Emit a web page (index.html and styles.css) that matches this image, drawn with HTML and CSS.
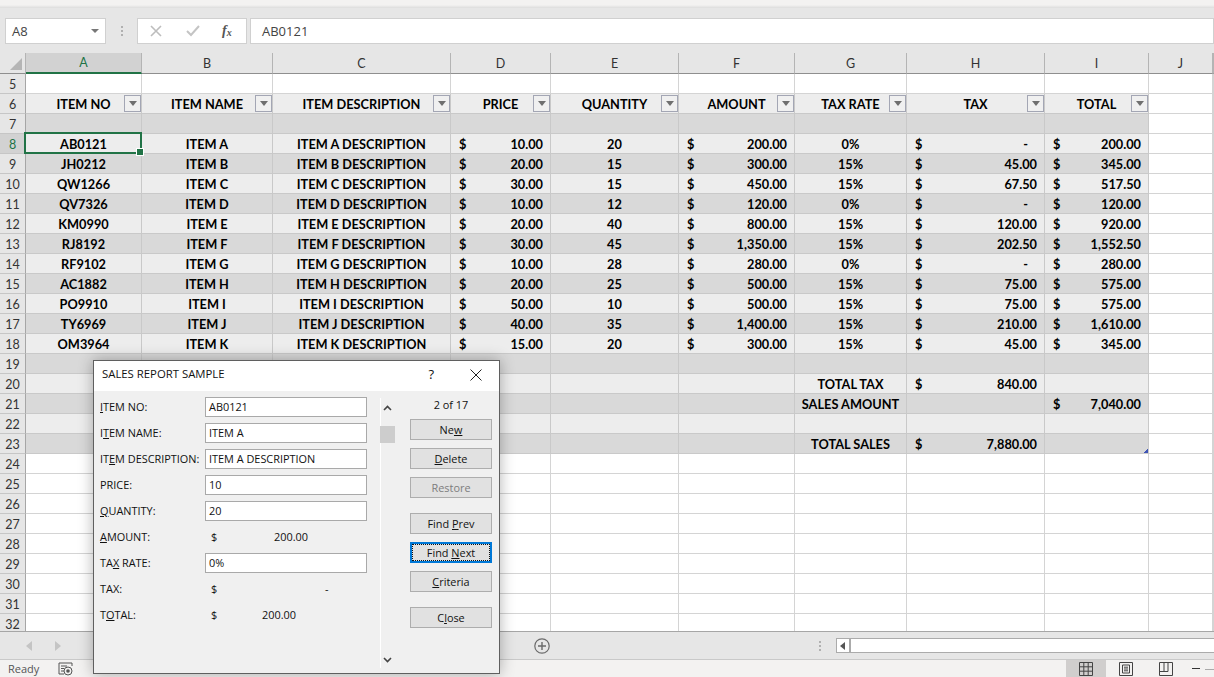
FILE: index.html
```html
<!DOCTYPE html>
<html lang="en">
<head>
<meta charset="utf-8">
<title>Sales Report Sample</title>
<link rel="stylesheet" href="styles.css">
</head>
<body>
<div class="app">
  <div class="topstrip"></div>
  <div class="fbar">
    <div class="namebox"><span>A8</span><i class="caret"></i></div>
    <div class="dots"><b></b><b></b><b></b></div>
    <div class="fxbox">
      <svg class="ficon" width="12" height="12" viewBox="0 0 12 12"><path d="M1 1l10 10M11 1L1 11" stroke="#bdbdbd" stroke-width="1.6" fill="none"/></svg>
      <svg class="ficon" width="14" height="12" viewBox="0 0 14 12"><path d="M1 6l4 4 8-9" stroke="#c4c4c4" stroke-width="2" fill="none"/></svg>
      <span class="fx">f<sub>x</sub></span>
    </div>
    <div class="formula">AB0121</div>
  </div>
  <div class="gridwrap">
    <table class="sheet">
      <colgroup><col class="c0"><col class="ca"><col class="cb"><col class="cc"><col class="cd"><col class="ce"><col class="cf"><col class="cg"><col class="ch"><col class="ci"><col class="cj"><col class="ck"></colgroup>
      <thead><tr><th class="corner"><i></i></th><th class="sel">A</th><th>B</th><th>C</th><th>D</th><th>E</th><th>F</th><th>G</th><th>H</th><th>I</th><th>J</th><th></th></tr></thead>
      <tbody>
        <tr><th>5</th><td></td><td></td><td></td><td></td><td></td><td></td><td></td><td></td><td></td><td></td><td></td></tr>
        <tr class="lt"><th>6</th><td class="hd">ITEM NO<i class="flt"></i></td><td class="hd">ITEM NAME<i class="flt"></i></td><td class="hd">ITEM DESCRIPTION<i class="flt"></i></td><td class="hd">PRICE<i class="flt"></i></td><td class="hd">QUANTITY<i class="flt"></i></td><td class="hd">AMOUNT<i class="flt"></i></td><td class="hd">TAX RATE<i class="flt"></i></td><td class="hd">TAX<i class="flt"></i></td><td class="hd">TOTAL<i class="flt"></i></td><td></td><td></td></tr>
        <tr class="dk"><th>7</th><td></td><td></td><td></td><td></td><td></td><td></td><td></td><td></td><td></td><td></td><td></td></tr>
        <tr class="lt"><th class="sel">8</th><td class="cur">AB0121<i class="cursor"></i></td><td>ITEM A</td><td>ITEM A DESCRIPTION</td><td><div class="acc"><span>$</span><span>10.00</span></div></td><td>20</td><td><div class="acc"><span>$</span><span>200.00</span></div></td><td>0%</td><td><div class="acc"><span>$</span><span class="dash">-</span></div></td><td><div class="acc"><span>$</span><span>200.00</span></div></td><td></td><td></td></tr>
        <tr class="dk"><th>9</th><td>JH0212</td><td>ITEM B</td><td>ITEM B DESCRIPTION</td><td><div class="acc"><span>$</span><span>20.00</span></div></td><td>15</td><td><div class="acc"><span>$</span><span>300.00</span></div></td><td>15%</td><td><div class="acc"><span>$</span><span>45.00</span></div></td><td><div class="acc"><span>$</span><span>345.00</span></div></td><td></td><td></td></tr>
        <tr class="lt"><th>10</th><td>QW1266</td><td>ITEM C</td><td>ITEM C DESCRIPTION</td><td><div class="acc"><span>$</span><span>30.00</span></div></td><td>15</td><td><div class="acc"><span>$</span><span>450.00</span></div></td><td>15%</td><td><div class="acc"><span>$</span><span>67.50</span></div></td><td><div class="acc"><span>$</span><span>517.50</span></div></td><td></td><td></td></tr>
        <tr class="dk"><th>11</th><td>QV7326</td><td>ITEM D</td><td>ITEM D DESCRIPTION</td><td><div class="acc"><span>$</span><span>10.00</span></div></td><td>12</td><td><div class="acc"><span>$</span><span>120.00</span></div></td><td>0%</td><td><div class="acc"><span>$</span><span class="dash">-</span></div></td><td><div class="acc"><span>$</span><span>120.00</span></div></td><td></td><td></td></tr>
        <tr class="lt"><th>12</th><td>KM0990</td><td>ITEM E</td><td>ITEM E DESCRIPTION</td><td><div class="acc"><span>$</span><span>20.00</span></div></td><td>40</td><td><div class="acc"><span>$</span><span>800.00</span></div></td><td>15%</td><td><div class="acc"><span>$</span><span>120.00</span></div></td><td><div class="acc"><span>$</span><span>920.00</span></div></td><td></td><td></td></tr>
        <tr class="dk"><th>13</th><td>RJ8192</td><td>ITEM F</td><td>ITEM F DESCRIPTION</td><td><div class="acc"><span>$</span><span>30.00</span></div></td><td>45</td><td><div class="acc"><span>$</span><span>1,350.00</span></div></td><td>15%</td><td><div class="acc"><span>$</span><span>202.50</span></div></td><td><div class="acc"><span>$</span><span>1,552.50</span></div></td><td></td><td></td></tr>
        <tr class="lt"><th>14</th><td>RF9102</td><td>ITEM G</td><td>ITEM G DESCRIPTION</td><td><div class="acc"><span>$</span><span>10.00</span></div></td><td>28</td><td><div class="acc"><span>$</span><span>280.00</span></div></td><td>0%</td><td><div class="acc"><span>$</span><span class="dash">-</span></div></td><td><div class="acc"><span>$</span><span>280.00</span></div></td><td></td><td></td></tr>
        <tr class="dk"><th>15</th><td>AC1882</td><td>ITEM H</td><td>ITEM H DESCRIPTION</td><td><div class="acc"><span>$</span><span>20.00</span></div></td><td>25</td><td><div class="acc"><span>$</span><span>500.00</span></div></td><td>15%</td><td><div class="acc"><span>$</span><span>75.00</span></div></td><td><div class="acc"><span>$</span><span>575.00</span></div></td><td></td><td></td></tr>
        <tr class="lt"><th>16</th><td>PO9910</td><td>ITEM I</td><td>ITEM I DESCRIPTION</td><td><div class="acc"><span>$</span><span>50.00</span></div></td><td>10</td><td><div class="acc"><span>$</span><span>500.00</span></div></td><td>15%</td><td><div class="acc"><span>$</span><span>75.00</span></div></td><td><div class="acc"><span>$</span><span>575.00</span></div></td><td></td><td></td></tr>
        <tr class="dk"><th>17</th><td>TY6969</td><td>ITEM J</td><td>ITEM J DESCRIPTION</td><td><div class="acc"><span>$</span><span>40.00</span></div></td><td>35</td><td><div class="acc"><span>$</span><span>1,400.00</span></div></td><td>15%</td><td><div class="acc"><span>$</span><span>210.00</span></div></td><td><div class="acc"><span>$</span><span>1,610.00</span></div></td><td></td><td></td></tr>
        <tr class="lt"><th>18</th><td>OM3964</td><td>ITEM K</td><td>ITEM K DESCRIPTION</td><td><div class="acc"><span>$</span><span>15.00</span></div></td><td>20</td><td><div class="acc"><span>$</span><span>300.00</span></div></td><td>15%</td><td><div class="acc"><span>$</span><span>45.00</span></div></td><td><div class="acc"><span>$</span><span>345.00</span></div></td><td></td><td></td></tr>
        <tr class="dk"><th>19</th><td></td><td></td><td></td><td></td><td></td><td></td><td></td><td></td><td></td><td></td><td></td></tr>
        <tr class="lt"><th>20</th><td></td><td></td><td></td><td></td><td></td><td></td><td>TOTAL TAX</td><td><div class="acc"><span>$</span><span>840.00</span></div></td><td></td><td></td><td></td></tr>
        <tr class="dk"><th>21</th><td></td><td></td><td></td><td></td><td></td><td></td><td>SALES AMOUNT</td><td></td><td><div class="acc"><span>$</span><span>7,040.00</span></div></td><td></td><td></td></tr>
        <tr class="lt"><th>22</th><td></td><td></td><td></td><td></td><td></td><td></td><td></td><td></td><td></td><td></td><td></td></tr>
        <tr class="dk"><th>23</th><td></td><td></td><td></td><td></td><td></td><td></td><td>TOTAL SALES</td><td><div class="acc"><span>$</span><span>7,880.00</span></div></td><td class="tblend"><i class="resize"></i></td><td></td><td></td></tr>
        <tr><th>24</th><td></td><td></td><td></td><td></td><td></td><td></td><td></td><td></td><td></td><td></td><td></td></tr>
        <tr><th>25</th><td></td><td></td><td></td><td></td><td></td><td></td><td></td><td></td><td></td><td></td><td></td></tr>
        <tr><th>26</th><td></td><td></td><td></td><td></td><td></td><td></td><td></td><td></td><td></td><td></td><td></td></tr>
        <tr><th>27</th><td></td><td></td><td></td><td></td><td></td><td></td><td></td><td></td><td></td><td></td><td></td></tr>
        <tr><th>28</th><td></td><td></td><td></td><td></td><td></td><td></td><td></td><td></td><td></td><td></td><td></td></tr>
        <tr><th>29</th><td></td><td></td><td></td><td></td><td></td><td></td><td></td><td></td><td></td><td></td><td></td></tr>
        <tr><th>30</th><td></td><td></td><td></td><td></td><td></td><td></td><td></td><td></td><td></td><td></td><td></td></tr>
        <tr><th>31</th><td></td><td></td><td></td><td></td><td></td><td></td><td></td><td></td><td></td><td></td><td></td></tr>
        <tr><th>32</th><td></td><td></td><td></td><td></td><td></td><td></td><td></td><td></td><td></td><td></td><td></td></tr>
      </tbody>
    </table>
  </div>
  <div class="tabbar">
    <div class="tabnav">
      <svg width="6" height="10" viewBox="0 0 6 10"><path d="M6 0v10L0 5z" fill="#c4c4c4"/></svg>
      <svg width="6" height="10" viewBox="0 0 6 10"><path d="M0 0v10l6-5z" fill="#c4c4c4"/></svg>
    </div>
    <svg class="addsheet" width="16" height="16" viewBox="0 0 16 16"><circle cx="8" cy="8" r="7.2" fill="none" stroke="#6a6a6a" stroke-width="1.2"/><path d="M8 4v8M4 8h8" stroke="#6a6a6a" stroke-width="1.4"/></svg>
    <div class="dots hdots"><b></b><b></b><b></b></div>
    <div class="hscroll">
      <div class="hleft"><svg width="6" height="8" viewBox="0 0 6 8"><path d="M5 0v8L0 4z" fill="#555"/></svg></div>
      <div class="htrack"></div>
    </div>
  </div>
  <div class="status">
    <span class="ready">Ready</span>
    <svg class="macro" width="15" height="14" viewBox="0 0 15 14"><path d="M1 1h13M1 1v11h5M14 1v3M3 4h6M3 6.5h3M3 9h3" stroke="#555" fill="none"/><circle cx="10" cy="9" r="4" fill="none" stroke="#555"/><circle cx="10" cy="9" r="1.8" fill="#555"/></svg>
    <div class="views">
      <div class="view on"><svg width="14" height="14" viewBox="0 0 14 14"><path d="M.5.5h13v13H.5zM.5 4.8h13M.5 9.2h13M4.8.5v13M9.2.5v13" fill="none" stroke="#444"/></svg></div>
      <div class="view"><svg width="14" height="14" viewBox="0 0 14 14"><path d="M.5.5h13v13H.5zM3.5 3h7v8h-7zM5 5.2h4M5 7h4M5 8.8h4" fill="none" stroke="#444"/></svg></div>
      <div class="view"><svg width="14" height="14" viewBox="0 0 14 14"><path d="M.5.5h13v13H.5zM.5 9.5h8.5V.5M5 .5v9" fill="none" stroke="#444"/></svg></div>
    </div>
    <span class="zminus"></span><span class="zline"></span>
  </div>

  <div class="dialog">
    <div class="dtitle"><span>SALES REPORT SAMPLE</span><span class="help">?</span><svg class="dclose" width="12" height="12" viewBox="0 0 12 12"><path d="M.5.5l11 11M11.5.5l-11 11" stroke="#222" fill="none"/></svg></div>
    <div class="dbody">
      <div class="dfields">
        <label><span><u>I</u>TEM NO:</span><span class="inp">AB0121</span></label>
        <label><span>I<u>T</u>EM NAME:</span><span class="inp">ITEM A</span></label>
        <label><span>IT<u>E</u>M DESCRIPTION:</span><span class="inp">ITEM A DESCRIPTION</span></label>
        <label><span>PRICE:</span><span class="inp">10</span></label>
        <label><span><u>Q</u>UANTITY:</span><span class="inp">20</span></label>
        <label><span><u>A</u>MOUNT:</span><span class="val"><span>$</span><span class="v1">200.00</span></span></label>
        <label><span>TA<u>X</u> RATE:</span><span class="inp">0%</span></label>
        <label><span>TAX:</span><span class="val"><span>$</span><span class="v2">-</span></span></label>
        <label><span>T<u>O</u>TAL:</span><span class="val"><span>$</span><span class="v3">200.00</span></span></label>
      </div>
      <div class="dscroll">
        <svg width="9" height="6" viewBox="0 0 9 6"><path d="M1 5l3.5-3.5L8 5" stroke="#444" stroke-width="1.6" fill="none"/></svg>
        <div class="thumb"></div>
        <svg width="9" height="6" viewBox="0 0 9 6"><path d="M1 1l3.5 3.5L8 1" stroke="#444" stroke-width="1.6" fill="none"/></svg>
      </div>
      <div class="dbtns">
        <div class="count">2 of 17</div>
        <div class="btn">Ne<u>w</u></div>
        <div class="btn"><u>D</u>elete</div>
        <div class="btn off">Restore</div>
        <div class="btn gap"><span>Find <u>P</u>rev</span></div>
        <div class="btn focus"><span>Find <u>N</u>ext</span></div>
        <div class="btn"><u>C</u>riteria</div>
        <div class="btn gap">C<u>l</u>ose</div>
      </div>
    </div>
  </div>
</div>
</body>
</html>
```
FILE: styles.css
```css
* { box-sizing: border-box; }
html, body { margin: 0; padding: 0; height: 100%; overflow: hidden; }
body { font-family: "Lato", "Liberation Sans", sans-serif; color: #000; background: #fff; }
.app { position: relative; width: 1214px; height: 677px; display: flex; flex-direction: column; overflow: hidden; }

.topstrip { height: 8px; background: linear-gradient(#f3f2f1 0, #f3f2f1 5px, #dcdcdc 8px); flex: none; }
.fbar { height: 45px; flex: none; background: #e6e6e6; display: flex; align-items: flex-start; padding: 10px 0 0 5px; }
.namebox { width: 101px; height: 26px; background: #fff; border: 1px solid #d0d0d0; display: flex; align-items: center; justify-content: space-between; padding: 0 6px 0 6px; font-size: 13px; color: #444; font-family: "Open Sans", sans-serif; }
.caret { width: 0; height: 0; border-left: 4px solid transparent; border-right: 4px solid transparent; border-top: 4px solid #777; }
.dots { width: 31px; height: 26px; display: flex; flex-direction: column; align-items: center; justify-content: center; gap: 2px; }
.dots b { width: 2px; height: 2px; background: #b0b0b0; }
.fxbox { width: 110px; height: 26px; background: #fff; border: 1px solid #d0d0d0; display: flex; align-items: center; padding-left: 12px; gap: 24px; }
.fx { font-family: "Liberation Serif", serif; font-style: italic; font-size: 14px; color: #555; margin-left: -2px; font-weight: bold; }
.fx sub { font-size: 10px; vertical-align: -1px; line-height: 0; }
.formula { flex: 1; margin-left: 3px; height: 26px; background: #fff; border: 1px solid #d0d0d0; display: flex; align-items: center; padding-left: 11px; font-size: 13px; color: #444; font-family: "Open Sans", sans-serif; }

.gridwrap { height: 578px; flex: none; overflow: hidden; background: #fff; }
.sheet { border-collapse: separate; border-spacing: 0; table-layout: fixed; width: 1214px; }
.c0 { width: 26px; } .ca { width: 116px; } .cb { width: 131px; } .cc { width: 178px; } .cd { width: 100px; } .ce { width: 128px; } .cf { width: 116px; } .cg { width: 112px; } .ch { width: 138px; } .ci { width: 104px; } .cj { width: 64px; } .ck { width: 1px; }
.sheet thead th { height: 21px; background: #e6e6e6; border-right: 1px solid #b4b4b4; border-bottom: 1px solid #8f8f8f; font-weight: 400; font-size: 12.5px; color: #333; padding: 0; position: relative; }
.sheet thead th.sel { background: #d2d2d2; color: #217346; border-bottom: 2px solid #217346; }
.sheet thead th.corner { background: #e6e6e6; }
.corner i { position: absolute; right: 3px; bottom: 3px; width: 0; height: 0; border-left: 12px solid transparent; border-bottom: 12px solid #b5b5b5; }
.sheet tbody th { height: 20px; padding: 2px 0 0; background: #e6e6e6; border-right: 1px solid #a6a6a6; border-bottom: 1px solid #c6c6c6; font-weight: 400; font-size: 12.5px; color: #333; text-align: center; line-height: 17px; }
.sheet tbody th.sel { background: #d2d2d2; color: #217346; }
.sheet td { height: 20px; padding: 2px 0 0; border-right: 1px solid #d4d4d4; border-bottom: 1px solid #d4d4d4; font-weight: 700; font-size: 12.75px; line-height: 17px; text-align: center; white-space: nowrap; position: relative; }
.lt td { background: #ededed; border-color: #c9c9c9; }
.dk td { background: #d9d9d9; border-color: #c9c9c9; }
.lt td:nth-child(n+11), .dk td:nth-child(n+11) { background: #fff; border-color: #d4d4d4; }
.acc { display: flex; justify-content: space-between; padding: 0 7px 0 8px; }
.acc .dash { padding-right: 9px; }
.flt { position: absolute; right: 0; top: 1px; width: 17px; height: 17px; background: #f0f0f0; border: 1px solid #a3a6b4; }
.flt::after { content: ""; position: absolute; left: 4px; top: 5px; border-left: 4px solid transparent; border-right: 4px solid transparent; border-top: 5px solid #6f6f6f; }
.cursor { position: absolute; left: -2px; top: -2px; right: -1px; bottom: -1px; border: 2px solid #217346; z-index: 2; }
.cursor::after { content: ""; position: absolute; right: -4px; bottom: -4px; width: 6px; height: 6px; background: #217346; border: 1px solid #fff; }
.resize { position: absolute; right: 0; bottom: 0; width: 4px; height: 4px; background: linear-gradient(135deg, transparent 45%, #3f55b5 45%); }

.tabbar { height: 28px; flex: none; background: #e6e6e6; border-top: 1px solid #a6a6a6; display: flex; align-items: center; position: relative; }
.tabnav { width: 84px; flex: none; padding-left: 26px; display: flex; gap: 23px; margin-top: 1px; }
.addsheet { margin-left: 450px; margin-top: 1px; flex: none; }
.hdots { width: 20px; margin-left: 260px; flex: none; }
.hscroll { flex: 1; height: 15px; margin-left: 6px; display: flex; border: 1px solid #ababab; border-right: 0; background: #fff; }
.hleft { width: 14px; border-right: 2px solid #ababab; display: flex; align-items: center; justify-content: center; }
.htrack { flex: 1; }

.status { height: 18px; flex: none; background: #f3f2f1; border-top: 1px solid #c9c9c9; display: flex; align-items: center; font-size: 12px; color: #555; position: relative; }
.ready { margin-left: 8px; font-family: "Open Sans", sans-serif; font-size: 11px; flex: none; }
.macro { margin-left: 19px; flex: none; }
.views { display: flex; margin-left: auto; height: 100%; flex: none; }
.view { width: 40px; display: flex; align-items: center; justify-content: center; }
.view.on { background: #d0cecd; }
.zminus { width: 8px; height: 1px; background: #333; margin-left: 6px; flex: none; }
.zline { width: 9px; height: 1px; background: #aaa; margin-left: 5px; margin-top: 2px; flex: none; }

.dialog { position: absolute; left: 93px; top: 360px; width: 407px; height: 314px; background: #f0f0f0; border: 1px solid #5f5f5f; box-shadow: 0 0 14px rgba(0,0,0,.3); font-family: "Open Sans", sans-serif; font-size: 10.9px; color: #111; display: flex; flex-direction: column; }
.dtitle { height: 30px; flex: none; background: #fff; display: flex; align-items: center; padding: 0 0 5px 8px; font-size: 11.35px; color: #111; }
.help { margin-left: auto; font-size: 13px; }
.dclose { margin-left: 36px; margin-right: 17px; margin-top: 2px; }
.dbody { flex: 1; display: flex; min-height: 0; }
.dfields { width: 286px; padding: 6px 0 0 6px; display: flex; flex-direction: column; gap: 6px; flex: none; }
.dfields label { display: flex; height: 20px; align-items: center; }
.dfields label > span:first-child { width: 105px; flex: none; padding-bottom: 2px; }
.inp { width: 162px; height: 20px; background: #fff; border: 1px solid #a9a9a9; padding-left: 3px; line-height: 18px; }
.val { position: relative; display: flex; width: 162px; padding: 0 0 2px 6px; }
.val .v1, .val .v2, .val .v3 { position: absolute; }
.v1 { left: 69px; } .v2 { left: 120px; } .v3 { left: 57px; }
.dscroll { width: 15px; margin-top: 7px; margin-bottom: 5px; flex: none; display: flex; flex-direction: column; align-items: center; box-shadow: inset 1px 0 #fff; padding: 7px 0 5px; }
.dscroll svg:last-child { margin-top: auto; }
.thumb { width: 15px; height: 17px; margin-top: 15px; background: #cdcdcd; }
.dbtns { width: 82px; margin-left: 15px; flex: none; display: flex; flex-direction: column; align-items: stretch; gap: 8px; padding-top: 7px; }
.count { height: 14px; text-align: center; line-height: 14px; margin-bottom: -1px; }
.btn { height: 21px; background: #e1e1e1; border: 1px solid #adadad; text-align: center; line-height: 19px; }
.btn.off { color: #7d7d7d; }
.btn.gap { margin-top: 7px; }
.btn.focus { border: 2px solid #0078d7; line-height: 17px; }
.btn.focus span { display: block; height: 17px; outline: 1px dotted #111; outline-offset: -1px; }
```
